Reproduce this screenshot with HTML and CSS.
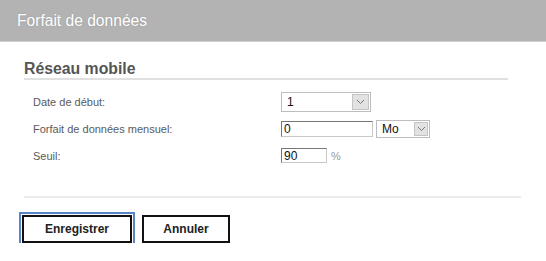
FILE: index.html
```html
<!DOCTYPE html>
<html lang="fr">
<head>
  <meta charset="UTF-8">
  <meta name="viewport" content="width=device-width, initial-scale=1.0">
  <title>Forfait de données</title>
  <link rel="stylesheet" href="styles.css">
</head>
<body>
  <div class="header">Forfait de données</div>

  <div class="section">
    <h2>Réseau mobile</h2>

    <div class="form">
      <div class="row">
        <label>Date de début:</label>
        <div class="select select-day">
          <span class="value">1</span>
          <span class="arrow">
            <svg width="9" height="6" viewBox="0 0 9 6"><path d="M1 1 L4.5 4.5 L8 1" fill="none" stroke="#777" stroke-width="1"/></svg>
          </span>
        </div>
      </div>

      <div class="row">
        <label>Forfait de données mensuel:</label>
        <input class="field field-wide" type="text" value="0">
        <div class="select select-unit">
          <span class="value">Mo</span>
          <span class="arrow">
            <svg width="9" height="6" viewBox="0 0 9 6"><path d="M1 1 L4.5 4.5 L8 1" fill="none" stroke="#777" stroke-width="1"/></svg>
          </span>
        </div>
      </div>

      <div class="row">
        <label>Seuil:</label>
        <input class="field field-small" type="text" value="90">
        <span class="unit">%</span>
      </div>
    </div>

    <div class="separator"></div>
  </div>

  <div class="buttons">
    <button class="button focused">Enregistrer</button>
    <button class="button">Annuler</button>
  </div>
</body>
</html>
```

FILE: styles.css
```css
body {
  margin: 0;
  padding: 0;
  background: white;
  font-family: "Liberation Sans", Arial, sans-serif;
  color: #555;
}

.header {
  height: 41px;
  line-height: 41px;
  padding-left: 17px;
  background-color: #b3b3b3;
  border-bottom: 1px solid #cfcfcf;
  color: white;
  font-size: 15.6px;
  text-shadow: 0 0 2px rgba(0, 0, 0, 0.15);
}

.section {
  padding-left: 24px;
}

h2 {
  width: 484px;
  margin: 18px 0 0 0;
  font-size: 15.8px;
  line-height: 18px;
  color: #555;
  border-bottom: 2px solid #e0e0e0;
}

.form {
  margin-top: 8px;
  padding-left: 9px;
}

.row {
  display: flex;
  align-items: center;
  height: 27px;
}

.row label {
  width: 248px;
  font-size: 11px;
  color: #5a5a5a;
}

.select {
  display: flex;
  align-items: stretch;
  box-sizing: border-box;
  border: 1px solid #bdbdbd;
  background: white;
  font-size: 12px;
  color: #111;
}

.select .value {
  flex: 1;
  display: flex;
  align-items: center;
  padding-left: 5px;
}

.select .arrow {
  display: flex;
  align-items: center;
  justify-content: center;
  width: 15px;
  margin: 1px;
  background: #e2e2e2;
  border: 1px solid #c4c4c4;
}

.select-day {
  width: 90px;
  height: 20px;
}

.select-unit {
  width: 54px;
  height: 18px;
  margin-left: 3px;
}

.select-unit .arrow {
  width: 12px;
}

.field {
  box-sizing: border-box;
  margin: 0;
  padding: 0 2px;
  border: 1px solid;
  border-color: #777 #c8c8c8 #c8c8c8 #777;
  font-family: "Liberation Sans", Arial, sans-serif;
  font-size: 12px;
  color: #111;
  background: white;
  outline: none;
}

.field-wide {
  width: 92px;
  height: 16px;
}

.field-small {
  width: 46px;
  height: 15px;
}

.unit {
  margin-left: 4px;
  font-size: 11px;
  color: #999;
}

.separator {
  width: 497px;
  height: 2px;
  margin-top: 27px;
  background: #ebebeb;
}

.buttons {
  display: flex;
  gap: 10px;
  padding-left: 22px;
  margin-top: 17px;
}

.button {
  box-sizing: border-box;
  height: 28px;
  padding: 0;
  background: white;
  border: 2px solid #111;
  font-family: "Liberation Sans", Arial, sans-serif;
  font-size: 12px;
  font-weight: bold;
  color: #222;
  cursor: pointer;
}

.button:first-child {
  width: 110px;
}

.button:last-child {
  width: 88px;
}

.focused {
  outline: 2px solid #5a84c8;
  outline-offset: 1px;
}
```
